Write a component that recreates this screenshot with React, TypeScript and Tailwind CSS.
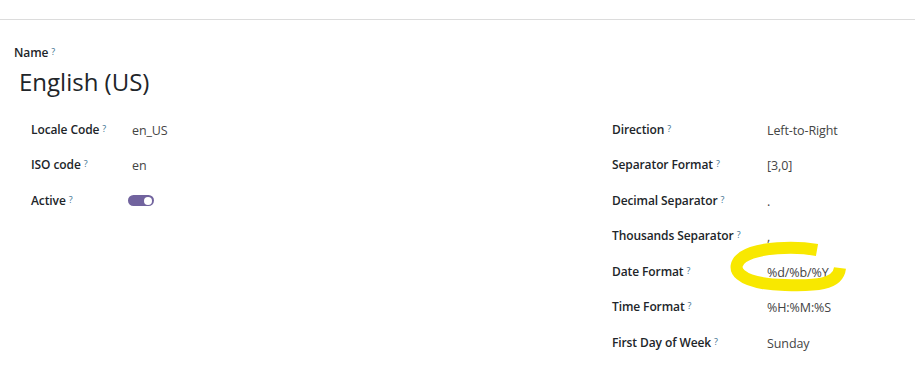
import React from 'react'

const Help = () => (
  <sup className="relative -top-[2px] ml-[3px] text-[9px] font-normal text-[#3b6f8f]">?</sup>
)

const Toggle = () => (
  <div className="-ml-[4px] -mt-[3px] flex h-[11px] w-[26px] items-center justify-end rounded-full bg-[#71639e] pr-[2px]">
    <div className="h-[8px] w-[8px] rounded-full bg-white" />
  </div>
)

export default function App() {
  const left = [
    { label: 'Locale Code', value: 'en_US' },
    { label: 'ISO code', value: 'en' },
    { label: 'Active', value: <Toggle /> },
  ]
  const right = [
    { label: 'Direction', value: 'Left-to-Right' },
    { label: 'Separator Format', value: '[3,0]' },
    { label: 'Decimal Separator', value: '.' },
    { label: 'Thousands Separator', value: ',' },
    { label: 'Date Format', value: '%d/%b/%Y' },
    { label: 'Time Format', value: '%H:%M:%S' },
    { label: 'First Day of Week', value: 'Sunday' },
  ]

  return (
    <div className="relative h-[385px] w-[915px] overflow-hidden bg-white font-['Open_Sans',sans-serif] text-[#212529]">
      <div className="h-[20px] border-b border-[#dcdcdc]" />
      <div className="pl-[14px] pt-[24px]">
        <div className="text-[12px] font-semibold leading-[18px] tracking-[-0.1px]">
          Name
          <Help />
        </div>
        <div className="ml-[5px] mt-[3px] text-[24px] leading-[34px]">English (US)</div>
      </div>
      <div className="mt-[13px] flex">
        <div className="ml-[31px] w-[260px]">
          {left.map((f) => (
            <div key={f.label} className="flex h-[35.5px] items-center">
              <div className="w-[101px] text-[12px] font-semibold tracking-[-0.1px]">
                {f.label}
                <Help />
              </div>
              <div className="pt-[3px] text-[12.5px] text-[#444] tracking-[-0.1px]">{f.value}</div>
            </div>
          ))}
        </div>
        <div className="ml-[321px] w-[280px]">
          {right.map((f) => (
            <div key={f.label} className="flex h-[35.5px] items-center">
              <div className="w-[155px] text-[12px] font-semibold tracking-[-0.1px]">
                {f.label}
                <Help />
              </div>
              <div className="pt-[3px] text-[12.5px] text-[#444] tracking-[-0.1px]">{f.value}</div>
            </div>
          ))}
        </div>
      </div>
      <svg className="pointer-events-none absolute left-0 top-0" width="915" height="385">
        <path
          d="M817 250 C795 246 758 247 743 257 C728 268 738 284 785 285 C815 286 838 285 840 268"
          fill="none"
          stroke="#f8e800"
          strokeWidth="12"
          strokeLinecap="butt"
        />
      </svg>
    </div>
  )
}
